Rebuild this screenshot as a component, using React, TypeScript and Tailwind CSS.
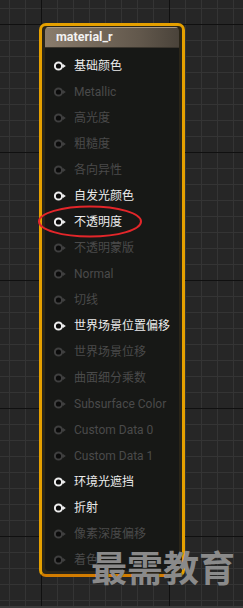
import React from "react";

const pins = [
  { label: "基础颜色", on: true },
  { label: "Metallic", on: false },
  { label: "高光度", on: false },
  { label: "粗糙度", on: false },
  { label: "各向异性", on: false },
  { label: "自发光颜色", on: true },
  { label: "不透明度", on: true },
  { label: "不透明蒙版", on: false },
  { label: "Normal", on: false },
  { label: "切线", on: false },
  { label: "世界场景位置偏移", on: true },
  { label: "世界场景位移", on: false },
  { label: "曲面细分乘数", on: false },
  { label: "Subsurface Color", on: false },
  { label: "Custom Data 0", on: false },
  { label: "Custom Data 1", on: false },
  { label: "环境光遮挡", on: true },
  { label: "折射", on: true },
  { label: "像素深度偏移", on: false },
  { label: "着色", on: false },
];

const Pin = ({ on }: { on: boolean }) => (
  <svg width="12" height="10" viewBox="0 0 12 10" className="shrink-0">
    <circle
      cx="4.5"
      cy="5"
      r="3.6"
      fill="#0b0b0b"
      stroke={on ? "#ececec" : "#3f3f3f"}
      strokeWidth="2"
    />
    <polygon points="9,3 11.8,5 9,7" fill={on ? "#ececec" : "#3f3f3f"} />
  </svg>
);

const App = () => {
  return (
    <div className="relative w-[243px] h-[608px] flex flex-col overflow-hidden bg-[#262626] bg-[linear-gradient(to_right,#101010_1px,transparent_1px),linear-gradient(to_bottom,#101010_1px,transparent_1px),linear-gradient(to_right,#343434_1px,transparent_1px),linear-gradient(to_bottom,#343434_1px,transparent_1px)] bg-[size:128px_128px,128px_128px,16px_16px,16px_16px] bg-[position:41px_24px,41px_24px,9px_8px,9px_8px] font-['Roboto','Noto_Sans_CJK_SC',sans-serif]">
      <div className="flex-1 pt-[23px] pl-[39px]">
        <div className="w-[146px] h-[554px] rounded-[7px] border-[3px] border-[#e5a000] border-b-[#d27c00] bg-[#2a2518] px-[3px] pt-[1px] pb-[3px]">
          <div className="h-full rounded-[4px] bg-[#171816] overflow-hidden flex flex-col">
            <div className="h-[21px] shrink-0 flex items-center pl-[11px] bg-[linear-gradient(to_right,#8a7c6c,#62584c_70%,#4a433a)] shadow-[inset_0_1px_0_#a89a88] border-b border-[#3a352d]">
              <span className="text-[12.5px] font-bold text-[#f2f2f2] leading-none">
                material_r
              </span>
            </div>
            <div className="pt-[5px] flex flex-col">
              {pins.map((p) => (
                <div key={p.label} className="h-[26px] flex items-center pl-[9px]">
                  <Pin on={p.on} />
                  <span
                    className={`ml-[8px] text-[12px] leading-none whitespace-nowrap ${
                      p.on ? "text-[#ececec]" : "text-[#4a4a4a]"
                    }`}
                  >
                    {p.label}
                  </span>
                </div>
              ))}
            </div>
          </div>
        </div>
      </div>
      <div className="h-[2px] bg-[#3c3c3c]" />

      <svg
        className="absolute left-0 top-0 pointer-events-none"
        width="243"
        height="608"
      >
        <ellipse
          cx="90"
          cy="221.5"
          rx="51"
          ry="15"
          fill="none"
          stroke="#e3262a"
          strokeWidth="2"
        />
      </svg>

      <div className="absolute left-[91px] top-[548px] text-[36px] leading-none font-bold text-[#8a8a8a] font-['Noto_Sans_CJK_SC',sans-serif] whitespace-nowrap">
        最需教育
      </div>
    </div>
  );
};

export default App;
